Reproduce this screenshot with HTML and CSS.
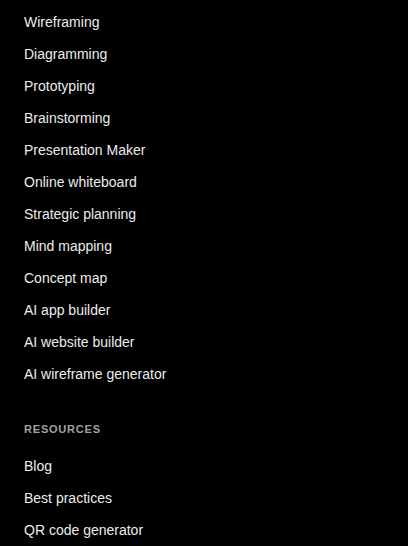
FILE: index.html
```html
<!DOCTYPE html>
<html lang="en">
<head>
    <meta charset="UTF-8">
    <meta name="viewport" content="width=device-width, initial-scale=1.0">
    <title>Footer Links</title>
    <link rel="stylesheet" href="styles.css">
</head>
<body>

    <!-- Use cases -->
    <ul class="link-list">
        <li><a href="#">Wireframing</a></li>
        <li><a href="#">Diagramming</a></li>
        <li><a href="#">Prototyping</a></li>
        <li><a href="#">Brainstorming</a></li>
        <li><a href="#">Presentation Maker</a></li>
        <li><a href="#">Online whiteboard</a></li>
        <li><a href="#">Strategic planning</a></li>
        <li><a href="#">Mind mapping</a></li>
        <li><a href="#">Concept map</a></li>
        <li><a href="#">AI app builder</a></li>
        <li><a href="#">AI website builder</a></li>
        <li><a href="#">AI wireframe generator</a></li>
    </ul>

    <!-- Resources -->
    <h4 class="section-title">RESOURCES</h4>
    <ul class="link-list">
        <li><a href="#">Blog</a></li>
        <li><a href="#">Best practices</a></li>
        <li><a href="#">QR code generator</a></li>
    </ul>

</body>
</html>
```

FILE: styles.css
```css
/* Reset */
* {
    margin: 0;
    padding: 0;
    box-sizing: border-box;
    font-family: "Liberation Sans", Arial, sans-serif;
}

body {
    background: #000;
    color: #ececec;
    padding: 6px 24px 0;
}

/* Link lists */
.link-list {
    list-style: none;
}

.link-list li {
    line-height: 32px;
    font-size: 14px;
}

.link-list a {
    color: #ececec;
    text-decoration: none;
}

.link-list a:hover {
    color: #fff;
}

/* Section heading */
.section-title {
    margin: 23px 0 5px;
    line-height: 32px;
    font-size: 11px;
    font-weight: bold;
    letter-spacing: 0.8px;
    color: #a0a0a0;
}
```
